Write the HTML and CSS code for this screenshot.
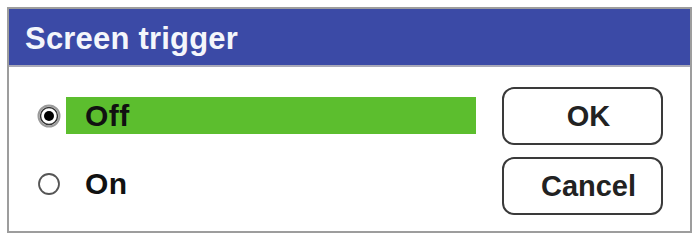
FILE: index.html
```html
<!DOCTYPE html>
<html>
<head>
<meta charset="utf-8">
<link rel="stylesheet" href="styles.css">
</head>
<body>
<div class="dialog">
  <div class="title">Screen trigger</div>
  <div class="content">
    <div class="options">
      <div class="row">
        <svg class="radio" viewBox="0 0 24 24" width="24" height="24">
          <circle cx="12" cy="12" r="10.5" fill="#fff" stroke="#9a9a9a" stroke-width="2"/>
          <circle cx="12" cy="12" r="8.5" fill="#fff" stroke="#333" stroke-width="1.5"/>
          <circle cx="12" cy="12" r="5" fill="#000"/>
        </svg>
        <div class="label selected">Off</div>
      </div>
      <div class="row">
        <svg class="radio" viewBox="0 0 24 24" width="24" height="24">
          <circle cx="12" cy="12" r="10" fill="#fff" stroke="#555" stroke-width="1.8"/>
        </svg>
        <div class="label">On</div>
      </div>
    </div>
    <div class="buttons">
      <div class="btn">OK</div>
      <div class="btn">Cancel</div>
    </div>
  </div>
</div>
</body>
</html>
```
FILE: styles.css
```css
html, body {
  margin: 0;
  padding: 0;
  background: #fff;
}
body {
  font-family: "Liberation Sans", Arial, sans-serif;
}
.dialog {
  margin: 7px 0 0 7px;
  width: 685px;
  height: 226px;
  box-sizing: border-box;
  border: 2px solid #9d9d9d;
  display: flex;
  flex-direction: column;
}
.title {
  height: 58px;
  background: #3b4aa6;
  border-bottom: 2px solid #a9a9b8;
  color: #f4f6fb;
  font-weight: bold;
  font-size: 31px;
  display: flex;
  align-items: center;
  padding-left: 16px;
  padding-top: 4px;
  box-sizing: border-box;
  letter-spacing: 0.2px;
}
.content {
  flex: 1;
  display: flex;
}
.options {
  padding: 30px 0 0 28px;
  display: flex;
  flex-direction: column;
  gap: 31px;
}
.row {
  display: flex;
  align-items: center;
  gap: 5px;
  height: 37px;
}
.radio {
  display: block;
  flex: none;
}
.label {
  width: 410px;
  height: 37px;
  box-sizing: border-box;
  padding-left: 19px;
  display: flex;
  align-items: center;
  font-size: 30px;
  font-weight: bold;
  color: #111;
  letter-spacing: 0.5px;
}
.label.selected {
  background: #5cbe2e;
}
.buttons {
  margin-left: 26px;
  padding-top: 20px;
  display: flex;
  flex-direction: column;
  gap: 12px;
}
.btn {
  width: 161px;
  height: 58px;
  box-sizing: border-box;
  border: 2px solid #3a3a3a;
  border-radius: 12px;
  display: flex;
  align-items: center;
  justify-content: center;
  padding-left: 12px;
  font-size: 29px;
  font-weight: bold;
  color: #222;
}
```
